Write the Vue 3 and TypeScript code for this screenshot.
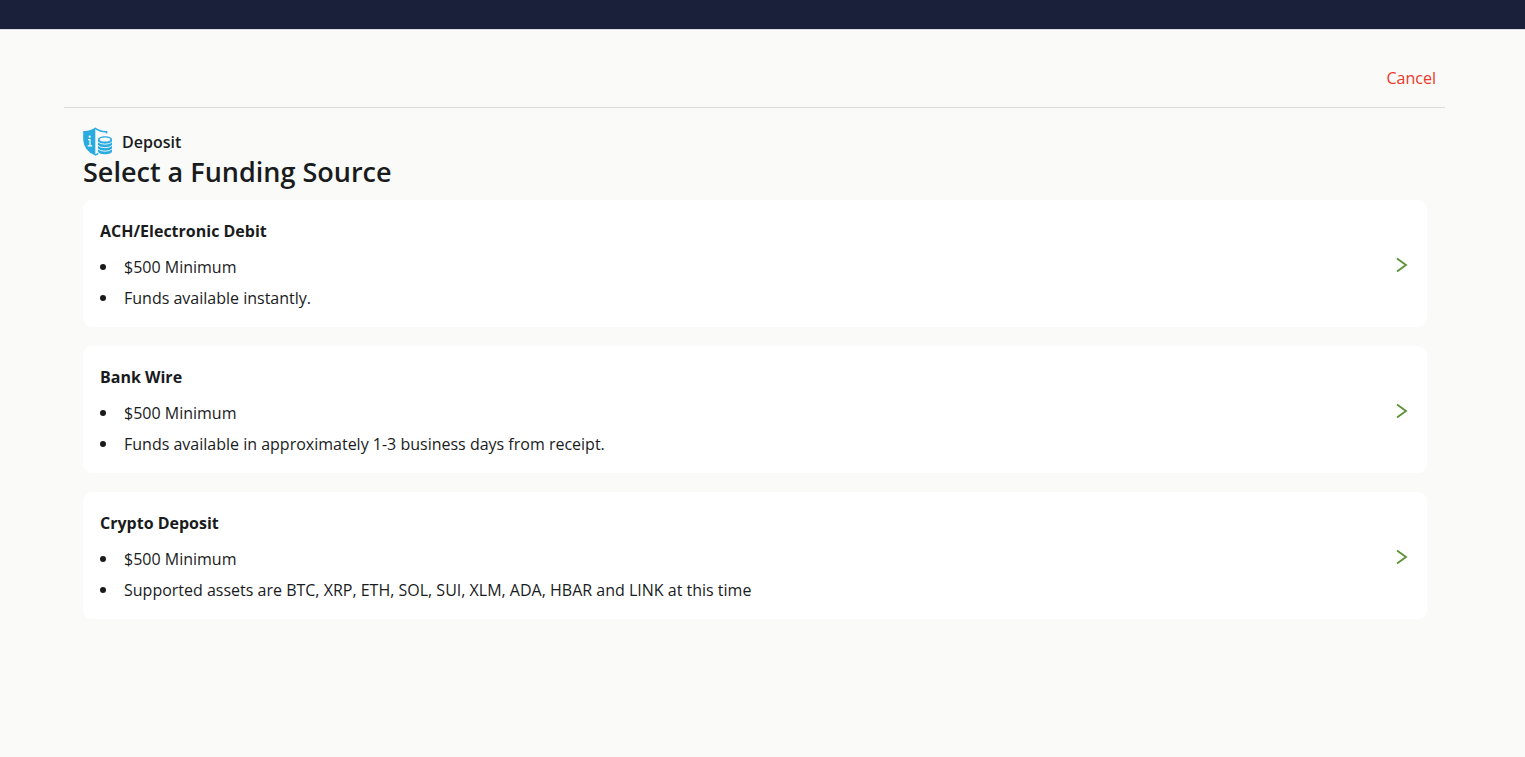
<script setup lang="ts">
interface FundingSource {
  id: string
  title: string
  details: string[]
}

const sources: FundingSource[] = [
  { id: 'ach', title: 'ACH/Electronic Debit', details: ['$500 Minimum', 'Funds available instantly.'] },
  {
    id: 'wire',
    title: 'Bank Wire',
    details: ['$500 Minimum', 'Funds available in approximately 1-3 business days from receipt.'],
  },
  {
    id: 'crypto',
    title: 'Crypto Deposit',
    details: [
      '$500 Minimum',
      'Supported assets are BTC, XRP, ETH, SOL, SUI, XLM, ADA, HBAR and LINK at this time',
    ],
  },
]
</script>

<template>
  <div class="page">
    <header class="topbar"></header>
    <div class="shell">
      <nav class="actions">
        <button type="button" class="cancel">Cancel</button>
      </nav>
      <main class="content">
        <div class="flow">
          <svg class="flow-icon" viewBox="0 0 30 30" aria-hidden="true">
            <path d="M12.300 .6v28Q1 24 .2 13V4Q7 4.500 12.300 .6z" fill="#29abe2" />
            <path
              d="M12 1.200Q17 5 23.600 4.700V6.600M12 28Q14 27.400 15.200 26.200"
              fill="none"
              stroke="#29abe2"
              stroke-width="1.500"
            />
            <circle cx="6.700" cy="9.700" r="1.100" fill="#fff" />
            <path d="M5 12.700h2v6M4.700 18.900h4.400" fill="none" stroke="#fff" stroke-width="1.200" />
            <path
              d="M15 12.500v11.700c0 1.700 3 3.100 7 3.100s7-1.400 7-3.100V12.500c0-1.900-3-3.300-7-3.300s-7 1.400-7 3.300z"
              fill="#29abe2"
            />
            <ellipse cx="22" cy="12.500" rx="5.300" ry="2.100" fill="#fafaf8" />
            <path
              d="M14.800 14.800Q17 17.200 22 17.200T29.200 14.800M14.800 18.300Q17 20.700 22 20.700T29.200 18.300M14.800 21.800Q17 24.200 22 24.200T29.200 21.800"
              fill="none"
              stroke="#fafaf8"
              stroke-width=".9"
            />
          </svg>
          <span>Deposit</span>
        </div>
        <h1>Select a Funding Source</h1>
        <div class="cards">
          <section v-for="source in sources" :key="source.id" class="card">
            <div class="card-text">
              <h2 :id="source.id">{{ source.title }}</h2>
              <ul>
                <li v-for="detail in source.details" :key="detail">{{ detail }}</li>
              </ul>
            </div>
            <button type="button" class="open" :aria-labelledby="source.id">
              <svg viewBox="0 0 12 16" aria-hidden="true">
                <path d="M1 1.500L10 8L1 14.500" fill="none" stroke="#5a9235" stroke-width="1.800" />
              </svg>
            </button>
          </section>
        </div>
      </main>
    </div>
  </div>
</template>

<style>
body {
  background: #fafaf8;
}
</style>

<style scoped>
.page {
  font-family: 'Segoe UI', 'Open Sans', 'Noto Sans', sans-serif;
  font-size: 16px;
  line-height: 24px;
  color: #191b1d;
}
.topbar {
  height: 29px;
  background: #1b203a;
  border-bottom: 1px solid #dddde0;
}
.shell {
  margin: 0 80px 0 64px;
}
.actions {
  display: flex;
  justify-content: flex-end;
  padding: 36px 9px 17px;
  border-bottom: 1px solid #dcdcdc;
}
button {
  padding: 0;
  border: 0;
  background: none;
  font: inherit;
  cursor: pointer;
}
.cancel {
  color: #ea3829;
}
.content {
  padding: 19px 18px 40px 19px;
}
.flow {
  display: flex;
  align-items: center;
  gap: 9px;
  font-weight: 600;
}
.flow-icon {
  width: 30px;
  height: 30px;
}
h1 {
  margin: 0;
  font-size: 27px;
  font-weight: 600;
  line-height: 30px;
}
.cards {
  display: grid;
  gap: 19px;
  margin-top: 13px;
}
.card {
  display: flex;
  align-items: center;
  justify-content: space-between;
  padding: 19px 18px 17px 17px;
  border-radius: 9px;
  background: #fff;
}
h2 {
  margin: 0 0 12px;
  font-size: 16px;
  font-weight: 700;
  line-height: 24px;
}
ul {
  display: grid;
  gap: 7px;
  margin: 0;
  padding: 0;
  list-style: none;
}
li {
  display: flex;
  align-items: center;
  gap: 18px;
}
li::before {
  content: '';
  width: 6px;
  height: 6px;
  border-radius: 50%;
  background: #191b1d;
}
.open {
  display: flex;
}
.open svg {
  width: 14px;
  height: 16px;
}
</style>
